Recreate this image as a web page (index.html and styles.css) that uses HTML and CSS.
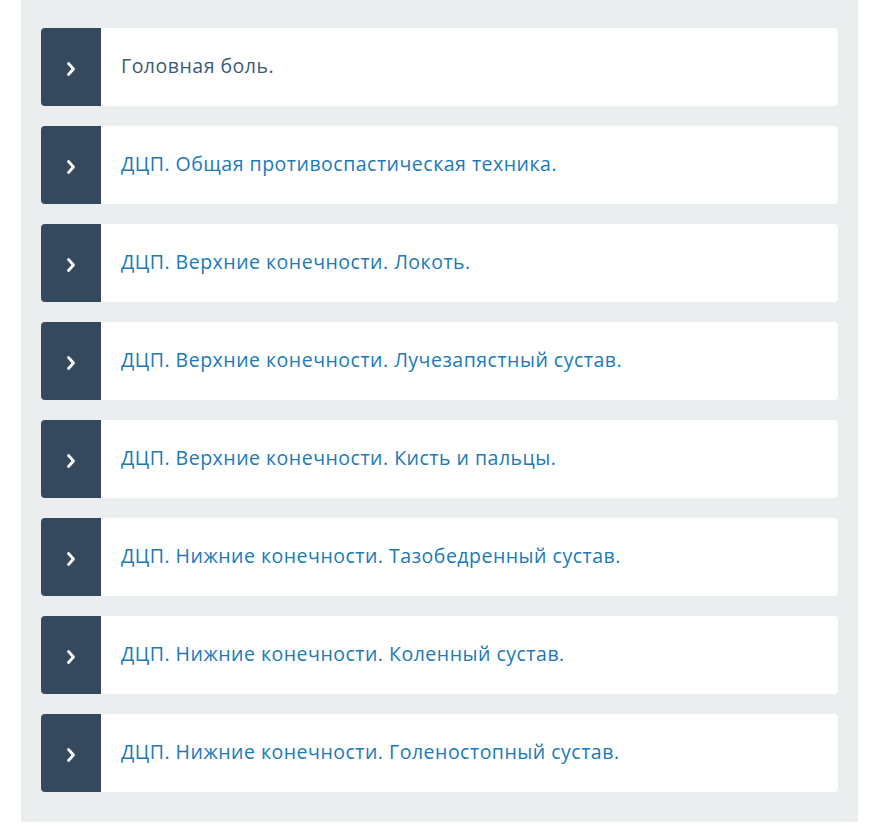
FILE: index.html
```html
<!DOCTYPE html>
<html lang="ru">
<head>
    <meta charset="UTF-8">
    <meta name="viewport" content="width=device-width, initial-scale=1.0">
    <title>Разделы</title>
    <link rel="stylesheet" href="styles.css">
</head>
<body>
    <div class="panel">
        <a class="item item-first" href="#">
            <span class="item-icon"><svg width="12" height="16" viewBox="0 0 12 16"><path d="M3.5 2.5 L8.5 8 L3.5 13.5" fill="none" stroke="#fff" stroke-width="2.8" stroke-linecap="round" stroke-linejoin="round"/></svg></span>
            <span class="item-text">Головная боль.</span>
        </a>
        <a class="item" href="#">
            <span class="item-icon"><svg width="12" height="16" viewBox="0 0 12 16"><path d="M3.5 2.5 L8.5 8 L3.5 13.5" fill="none" stroke="#fff" stroke-width="2.8" stroke-linecap="round" stroke-linejoin="round"/></svg></span>
            <span class="item-text">ДЦП. Общая противоспастическая техника.</span>
        </a>
        <a class="item" href="#">
            <span class="item-icon"><svg width="12" height="16" viewBox="0 0 12 16"><path d="M3.5 2.5 L8.5 8 L3.5 13.5" fill="none" stroke="#fff" stroke-width="2.8" stroke-linecap="round" stroke-linejoin="round"/></svg></span>
            <span class="item-text">ДЦП. Верхние конечности. Локоть.</span>
        </a>
        <a class="item" href="#">
            <span class="item-icon"><svg width="12" height="16" viewBox="0 0 12 16"><path d="M3.5 2.5 L8.5 8 L3.5 13.5" fill="none" stroke="#fff" stroke-width="2.8" stroke-linecap="round" stroke-linejoin="round"/></svg></span>
            <span class="item-text">ДЦП. Верхние конечности. Лучезапястный сустав.</span>
        </a>
        <a class="item" href="#">
            <span class="item-icon"><svg width="12" height="16" viewBox="0 0 12 16"><path d="M3.5 2.5 L8.5 8 L3.5 13.5" fill="none" stroke="#fff" stroke-width="2.8" stroke-linecap="round" stroke-linejoin="round"/></svg></span>
            <span class="item-text">ДЦП. Верхние конечности. Кисть и пальцы.</span>
        </a>
        <a class="item" href="#">
            <span class="item-icon"><svg width="12" height="16" viewBox="0 0 12 16"><path d="M3.5 2.5 L8.5 8 L3.5 13.5" fill="none" stroke="#fff" stroke-width="2.8" stroke-linecap="round" stroke-linejoin="round"/></svg></span>
            <span class="item-text">ДЦП. Нижние конечности. Тазобедренный сустав.</span>
        </a>
        <a class="item" href="#">
            <span class="item-icon"><svg width="12" height="16" viewBox="0 0 12 16"><path d="M3.5 2.5 L8.5 8 L3.5 13.5" fill="none" stroke="#fff" stroke-width="2.8" stroke-linecap="round" stroke-linejoin="round"/></svg></span>
            <span class="item-text">ДЦП. Нижние конечности. Коленный сустав.</span>
        </a>
        <a class="item" href="#">
            <span class="item-icon"><svg width="12" height="16" viewBox="0 0 12 16"><path d="M3.5 2.5 L8.5 8 L3.5 13.5" fill="none" stroke="#fff" stroke-width="2.8" stroke-linecap="round" stroke-linejoin="round"/></svg></span>
            <span class="item-text">ДЦП. Нижние конечности. Голеностопный сустав.</span>
        </a>
    </div>
</body>
</html>
```

FILE: styles.css
```css
/* Page */
body {
    margin: 0;
    background-color: #FFFFFF;
    font-family: "Open Sans", Lato, sans-serif;
}

/* Grey panel holding the list */
.panel {
    margin-left: 21px;
    width: 837px;
    box-sizing: border-box;
    padding: 28px 20px 30px 20px;
    background-color: #EAEEEF;
    display: flex;
    flex-direction: column;
    gap: 20px;
}

/* List rows */
.item {
    display: flex;
    align-items: center;
    height: 78px;
    background-color: #FFFFFF;
    border-radius: 4px;
    overflow: hidden;
    text-decoration: none;
}

.item-icon {
    width: 60px;
    height: 100%;
    flex-shrink: 0;
    background-color: #34495E;
    display: flex;
    align-items: center;
    justify-content: center;
    padding-top: 3px;
    box-sizing: border-box;
}

.item-text {
    padding-left: 20px;
    padding-bottom: 3px;
    font-size: 19.5px;
    letter-spacing: 0.5px;
    color: #2079BA;
}

.item-first .item-text {
    color: #3B5A7A;
}
```
